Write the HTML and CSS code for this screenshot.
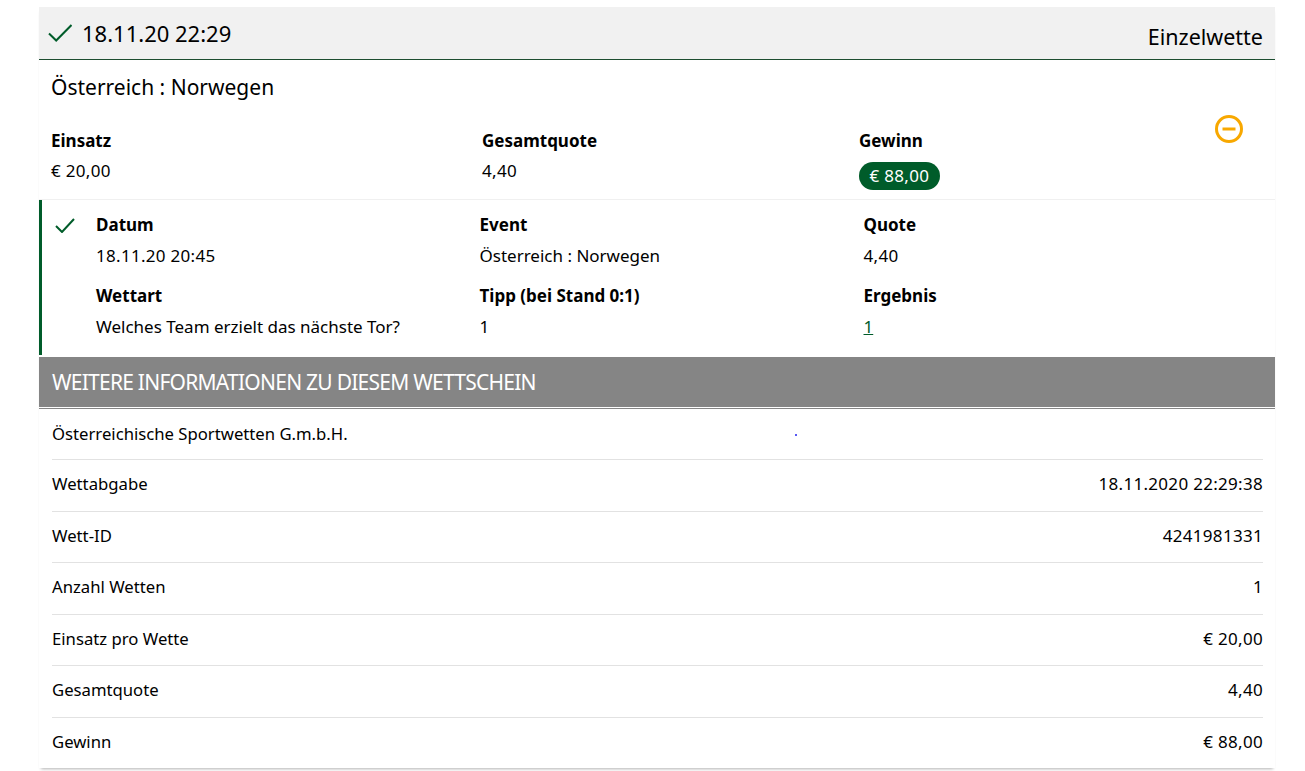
FILE: index.html
```html
<!DOCTYPE html>
<html lang="de">
<head>
<meta charset="utf-8">
<title>Wettschein</title>
<link rel="stylesheet" href="styles.css">
</head>
<body>
<main class="slip">
  <header class="slip-head">
    <div class="head-left">
      <svg class="check-lg" viewBox="0 0 24 18" aria-hidden="true"><path d="M1 9.5 8.2 16.5 23.5 1"/></svg>
      <span class="head-date">18.11.20 22:29</span>
    </div>
    <span class="head-type">Einzelwette</span>
  </header>
  <section class="summary">
    <h1 class="match">Österreich : Norwegen</h1>
    <div class="summary-grid">
      <div class="cell"><div class="label">Einsatz</div><div class="value num">€ 20,00</div></div>
      <div class="cell"><div class="label">Gesamtquote</div><div class="value num">4,40</div></div>
      <div class="cell"><div class="label">Gewinn</div><div class="value num"><span class="pill">€ 88,00</span></div></div>
      <div class="toggle">
        <svg class="minus" viewBox="0 0 28 28" aria-hidden="true"><circle cx="14" cy="14" r="12.5"/><path d="M7.5 14h13"/></svg>
      </div>
    </div>
  </section>
  <section class="bet">
    <svg class="check-sm" viewBox="0 0 20 15" aria-hidden="true"><path d="M1 8 7 14 19 1"/></svg>
    <div class="bet-grid">
      <div class="cell"><div class="label">Datum</div><div class="value num">18.11.20 20:45</div></div>
      <div class="cell"><div class="label">Event</div><div class="value">Österreich : Norwegen</div></div>
      <div class="cell"><div class="label">Quote</div><div class="value num">4,40</div></div>
      <div class="cell"><div class="label">Wettart</div><div class="value">Welches Team erzielt das nächste Tor?</div></div>
      <div class="cell"><div class="label">Tipp (bei Stand 0:1)</div><div class="value">1</div></div>
      <div class="cell"><div class="label">Ergebnis</div><div class="value"><a class="result" href="#">1</a></div></div>
    </div>
  </section>
  <h2 class="info-title">WEITERE INFORMATIONEN ZU DIESEM WETTSCHEIN</h2>
  <section class="info">
    <div class="row"><span>Österreichische Sportwetten G.m.b.H.</span><i class="dot"></i></div>
    <div class="row"><span>Wettabgabe</span><span class="row-num">18.11.2020 22:29:38</span></div>
    <div class="row"><span>Wett-ID</span><span class="row-num">4241981331</span></div>
    <div class="row"><span>Anzahl Wetten</span><span class="row-num">1</span></div>
    <div class="row"><span>Einsatz pro Wette</span><span class="row-num">€ 20,00</span></div>
    <div class="row"><span>Gesamtquote</span><span class="row-num">4,40</span></div>
    <div class="row"><span>Gewinn</span><span class="row-num">€ 88,00</span></div>
  </section>
</main>
</body>
</html>
```
FILE: styles.css
```css
* { box-sizing: border-box; }
html, body { margin: 0; height: 771px; overflow: hidden; background: #fff; }
body { padding: 7px 30px 0 39px; font-family: "Noto Sans", sans-serif; font-size: 16px; color: #000; }
.slip { width: 1236px; height: 761px; box-shadow: 0 3px 3px -2px rgba(0,0,0,.3); background: #fff; }
.slip-head { height: 53px; background: #f1f1f1; border-bottom: 1px solid #1d4d30; display: flex; justify-content: space-between; padding: 0 12px 0 9px; }
.head-left { display: flex; align-items: center; }
.check-lg { width: 24px; height: 18px; margin-right: 10px; }
.check-lg path, .check-sm path { fill: none; stroke: #005c2a; stroke-width: 2; }
.head-date { font-size: 22px; }
.head-type { font-size: 21.5px; align-self: flex-end; line-height: 32px; padding-bottom: 6px; }
.summary { height: 140px; border-bottom: 1px solid #f0f0f0; padding: 11px 0 0 12px; }
.match { margin: 0; font-size: 21px; font-weight: 400; line-height: 32px; }
.summary-grid { display: grid; grid-template-columns: 431px 377px 1fr; margin-top: 26px; position: relative; }
.summary-grid .value { margin-top: 6px; }
.toggle { position: absolute; right: 32px; top: -14px; }
.minus { display: block; width: 28px; height: 28px; fill: none; stroke: #f8a800; stroke-width: 3; }
.label { font-weight: 700; font-size: 17px; line-height: 24px; }
.value { font-size: 17px; line-height: 24px; }
.num, .row-num { letter-spacing: .3px; }
.pill { display: inline-block; background: #005c2a; color: #fff; border-radius: 14px; height: 28px; line-height: 28px; padding: 0 10.5px; margin-top: 3px; vertical-align: top; }
.bet { height: 155px; border-left: 3px solid #005c2a; display: flex; }
.check-sm { width: 20px; height: 15px; margin: 18px 0 0 13px; flex: none; }
.bet-grid { display: grid; grid-template-columns: 383.5px 384px 1fr; grid-auto-rows: 71px; margin-left: 21px; padding-top: 13px; flex: 1; }
.bet-grid .value { margin-top: 7px; }
.result { color: #005c2a; }
.info-title { margin: 2px 0 0; height: 50px; background: #858585; color: #fff; font-size: 21px; letter-spacing: -.75px; font-weight: 400; line-height: 51px; padding-left: 13px; }
.info { border-top: 1px solid #858585; margin-top: 1px; padding: 0 12px 0 13px; }
.row { height: 51.5px; display: flex; justify-content: space-between; align-items: center; border-bottom: 1px solid #e2e2e2; font-size: 16.7px; position: relative; padding-bottom: 3px; }
.row:first-child { height: 51px; padding-bottom: 2px; }
.row:last-child { border-bottom: 0; }
.row-num { font-size: 17px; }
.dot { position: absolute; left: 743px; top: 25px; width: 2px; height: 2px; background: #2020f0; border-radius: 50%; }
```
